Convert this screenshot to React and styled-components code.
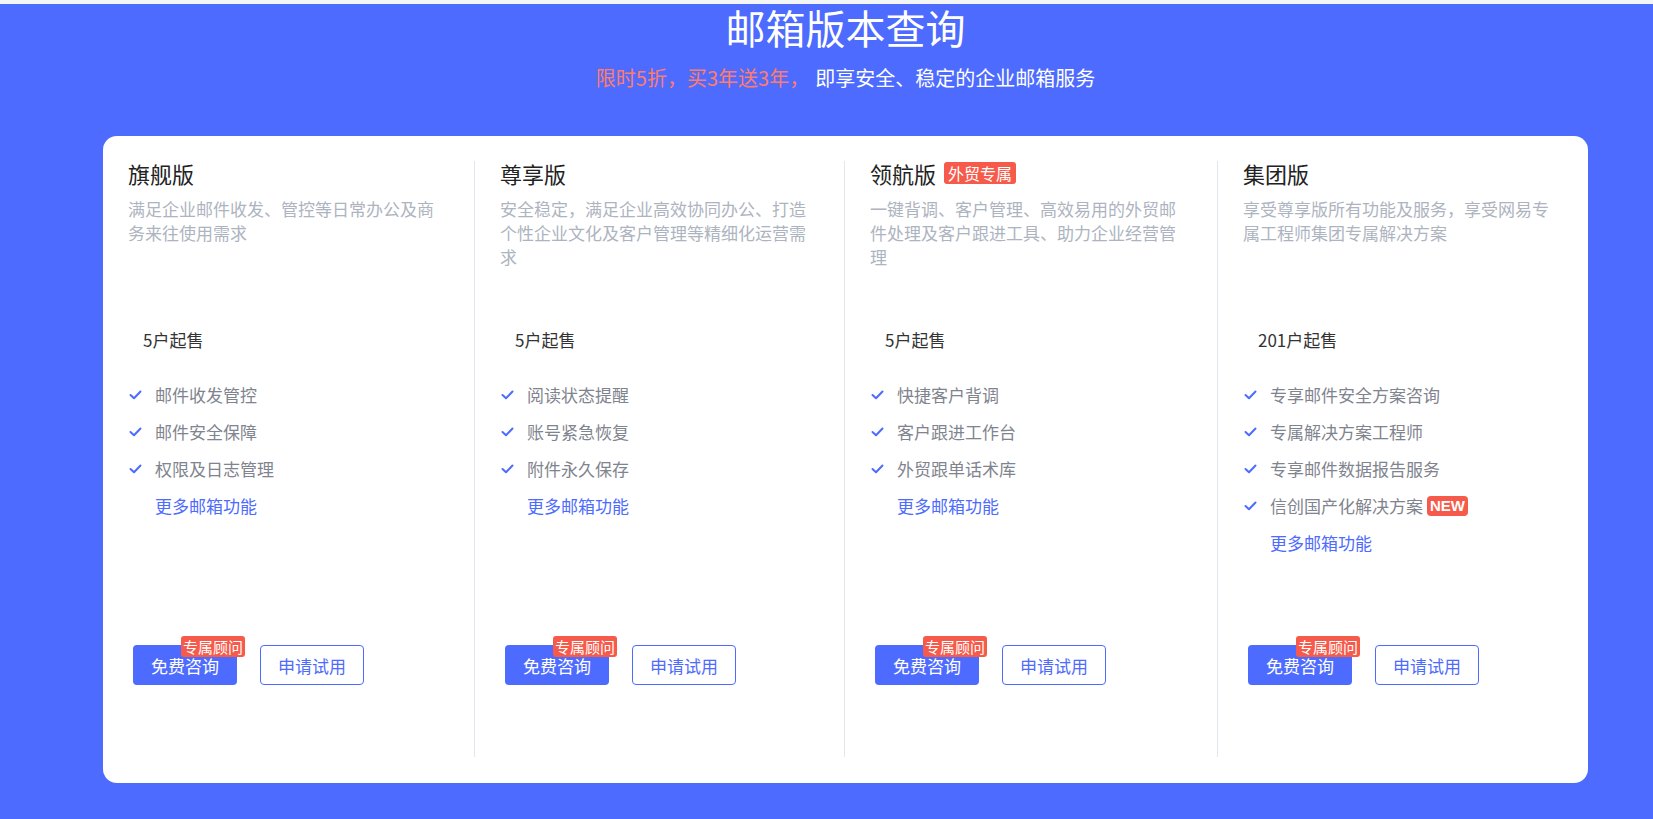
import React from "react";
import styled, {createGlobalStyle} from "styled-components";

const GlobalStyle = createGlobalStyle`
    html, body {
        margin: 0;
        padding: 0;
        background: #4d6bfe;
        font-family: "Noto Sans CJK SC", "Noto Sans", sans-serif;
    }
    * { box-sizing: border-box; }
`;

const plans = [
    {
        name: "旗舰版",
        desc: "满足企业邮件收发、管控等日常办公及商务来往使用需求",
        sale: "5户起售",
        features: [{text: "邮件收发管控"}, {text: "邮件安全保障"}, {text: "权限及日志管理"}],
    },
    {
        name: "尊享版",
        desc: "安全稳定，满足企业高效协同办公、打造个性企业文化及客户管理等精细化运营需求",
        sale: "5户起售",
        features: [{text: "阅读状态提醒"}, {text: "账号紧急恢复"}, {text: "附件永久保存"}],
    },
    {
        name: "领航版",
        tag: "外贸专属",
        desc: "一键背调、客户管理、高效易用的外贸邮件处理及客户跟进工具、助力企业经营管理",
        sale: "5户起售",
        features: [{text: "快捷客户背调"}, {text: "客户跟进工作台"}, {text: "外贸跟单话术库"}],
    },
    {
        name: "集团版",
        desc: "享受尊享版所有功能及服务，享受网易专属工程师集团专属解决方案",
        sale: "201户起售",
        features: [
            {text: "专享邮件安全方案咨询"},
            {text: "专属解决方案工程师"},
            {text: "专享邮件数据报告服务"},
            {text: "信创国产化解决方案", isNew: true},
        ],
    },
];

const Check = () => (
    <svg width="13" height="10" viewBox="0 0 13 10">
        <polyline points="1.5,5 5,8.3 11.5,1.5" fill="none" stroke="#4d6bfe" strokeWidth="2" strokeLinecap="round" strokeLinejoin="round"/>
    </svg>
);

const App = () => {
    return(
        <>
        <GlobalStyle/>
        <Page>
            <TopStrip/>
            <Header>
                <Title>邮箱版本查询</Title>
                <Subtitle>
                    <Promo>限时5折，买3年送3年，</Promo>
                    <span>即享安全、稳定的企业邮箱服务</span>
                </Subtitle>
            </Header>
            <Card>
                {plans.map((plan, i) => (
                    <Column key={plan.name} first={i === 0}>
                        <PlanName>
                            {plan.name}
                            {plan.tag && <Tag>{plan.tag}</Tag>}
                        </PlanName>
                        <Desc>{plan.desc}</Desc>
                        <Sale>{plan.sale}</Sale>
                        <Features>
                            {plan.features.map(f => (
                                <Feature key={f.text}>
                                    <CheckBox><Check/></CheckBox>
                                    {f.text}
                                    {f.isNew && <NewBadge>NEW</NewBadge>}
                                </Feature>
                            ))}
                            <MoreLink>更多邮箱功能</MoreLink>
                        </Features>
                        <Actions>
                            <PrimaryButton>
                                免费咨询
                                <Badge>专属顾问</Badge>
                            </PrimaryButton>
                            <OutlineButton>申请试用</OutlineButton>
                        </Actions>
                    </Column>
                ))}
            </Card>
        </Page>
        </>
    )
}

const Page = styled.div`
    width: 1653px;
    height: 819px;
    background: #4d6bfe;
    overflow: hidden;
`;

const TopStrip = styled.div`
    height: 4px;
    background: #f4f5f7;
`;

const Header = styled.div`
    padding-left: 38px;
    text-align: center;
`;

const Title = styled.h1`
    margin: 0;
    font-size: 40px;
    font-weight: 400;
    line-height: 46px;
    color: #ffffff;
`;

const Subtitle = styled.p`
    margin: 14px 0 0;
    font-size: 20px;
    line-height: 28px;
    color: #ffffff;
`;

const Promo = styled.span`
    color: #ff7b6c;
    margin-right: 6px;
`;

const Card = styled.div`
    margin: 44px 0 0 103px;
    width: 1485px;
    height: 647px;
    background: #ffffff;
    border-radius: 14px;
    padding: 25px 0 26px;
    display: grid;
    grid-template-columns: 371px 370px 373px 371px;
`;

const Column = styled.div`
    display: flex;
    flex-direction: column;
    padding: 0 25px;
    border-left: ${props => props.first ? "none" : "1px solid #e2e7ef"};
`;

const PlanName = styled.div`
    display: flex;
    align-items: center;
    font-size: 22px;
    line-height: 24px;
    color: #222222;
`;

const Tag = styled.span`
    margin-left: 8px;
    height: 22px;
    padding: 0 4px;
    border-radius: 3px;
    background: #f65a4a;
    color: #ffffff;
    font-size: 16px;
    line-height: 22px;
`;

const Desc = styled.p`
    margin: 12px 0 0;
    height: 131px;
    font-size: 17px;
    line-height: 24px;
    color: #adb4c0;
`;

const Sale = styled.div`
    padding-left: 15px;
    font-size: 17px;
    line-height: 24px;
    color: #333333;
`;

const Features = styled.ul`
    list-style: none;
    margin: 31px 0 0;
    padding: 0;
    display: flex;
    flex-direction: column;
    gap: 13px;
`;

const Feature = styled.li`
    display: flex;
    align-items: center;
    font-size: 17px;
    line-height: 24px;
    color: #7f848e;
`;

const CheckBox = styled.span`
    display: inline-flex;
    width: 27px;
    padding-left: 1px;
`;

const NewBadge = styled.span`
    margin-left: 4px;
    height: 20px;
    padding: 0 3px;
    border-radius: 4px;
    background: #f65a4a;
    color: #ffffff;
    font-family: "Liberation Sans", "Noto Sans", sans-serif;
    font-size: 15px;
    font-weight: 700;
    line-height: 20px;
`;

const MoreLink = styled.li`
    padding-left: 27px;
    font-size: 17px;
    line-height: 24px;
    color: #4d6bfe;
    cursor: pointer;
`;

const Actions = styled.div`
    margin-top: auto;
    margin-bottom: 72px;
    padding-left: 5px;
    display: flex;
    gap: 23px;
`;

const PrimaryButton = styled.button`
    position: relative;
    width: 104px;
    height: 40px;
    border: none;
    border-radius: 4px;
    background: #4d6bfe;
    color: #ffffff;
    font-family: inherit;
    font-size: 17px;
    cursor: pointer;
`;

const Badge = styled.span`
    position: absolute;
    left: 48px;
    top: -9px;
    height: 21px;
    padding: 0 2px;
    border-radius: 3px;
    background: #f65a4a;
    color: #ffffff;
    font-size: 15px;
    line-height: 21px;
    white-space: nowrap;
`;

const OutlineButton = styled.button`
    width: 104px;
    height: 40px;
    border: 1px solid #4d6bfe;
    border-radius: 4px;
    background: #ffffff;
    color: #4d6bfe;
    font-family: inherit;
    font-size: 17px;
    cursor: pointer;
`;

export default App;
